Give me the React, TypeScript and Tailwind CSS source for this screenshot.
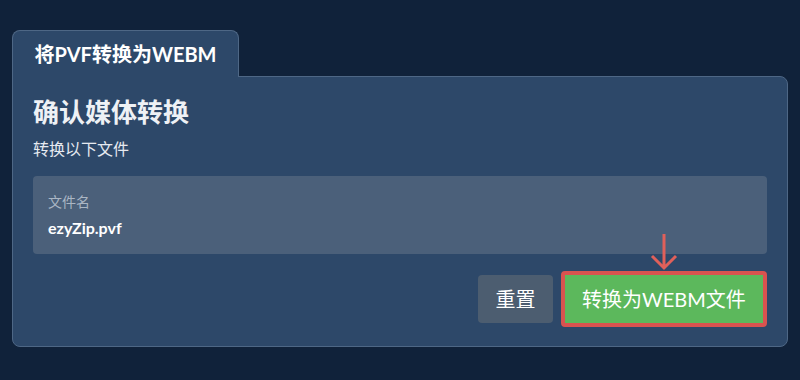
export default function App() {
  const font = { fontFamily: 'Lato, "Noto Sans CJK SC", sans-serif' };
  return (
    <div className="min-h-screen w-full bg-[#10223a] pt-[30px] px-[12px]" style={font}>
      <div className="w-[776px]">
        {/* Tab */}
        <div className="relative z-10 -mb-px flex h-[47px] w-[227px] items-center justify-center rounded-t-lg border border-b-0 border-[#4e6785] bg-[#2d4869]">
          <span className="text-[20px] font-bold text-white">将PVF转换为WEBM</span>
        </div>

        {/* Panel */}
        <div className="relative rounded-b-lg rounded-tr-lg border border-[#4e6785] bg-[#2d4869] px-[20px] pt-[19px] pb-[19px]">
          <h1 className="text-[26px] font-bold leading-[32px] text-[#eef1f5]">确认媒体转换</h1>
          <p className="mt-[10px] text-[16px] leading-[22px] text-[#e6eaf0]">转换以下文件</p>

          <div className="mt-[16px] rounded-[4px] bg-[#4b607a] px-[15px] pt-[16px] pb-[15px]">
            <div className="text-[14px] leading-[20px] text-[#aab6c4]">文件名</div>
            <div className="mt-[5px] text-[16px] font-bold leading-[22px] text-white">ezyZip.pvf</div>
          </div>

          <div className="mt-[17px] flex items-center justify-end gap-[8px]">
            <button className="h-[48px] w-[75px] rounded-[4px] bg-[#4c5d70] text-[20px] text-white">重置</button>
            <button className="h-[56px] w-[206px] rounded-[4px] border-[4px] border-[#d9534f] bg-[#5cb85c] text-[20px] text-white">
              转换为WEBM文件
            </button>
          </div>

          {/* Arrow pointer */}
          <svg className="absolute left-[636px] top-[156px]" width="30" height="38" viewBox="0 0 30 38" fill="none">
            <path d="M15 1 V35 M3 23 L15 35 L27 23" stroke="#e0605a" strokeWidth="3" />
          </svg>
        </div>
      </div>
    </div>
  );
}
